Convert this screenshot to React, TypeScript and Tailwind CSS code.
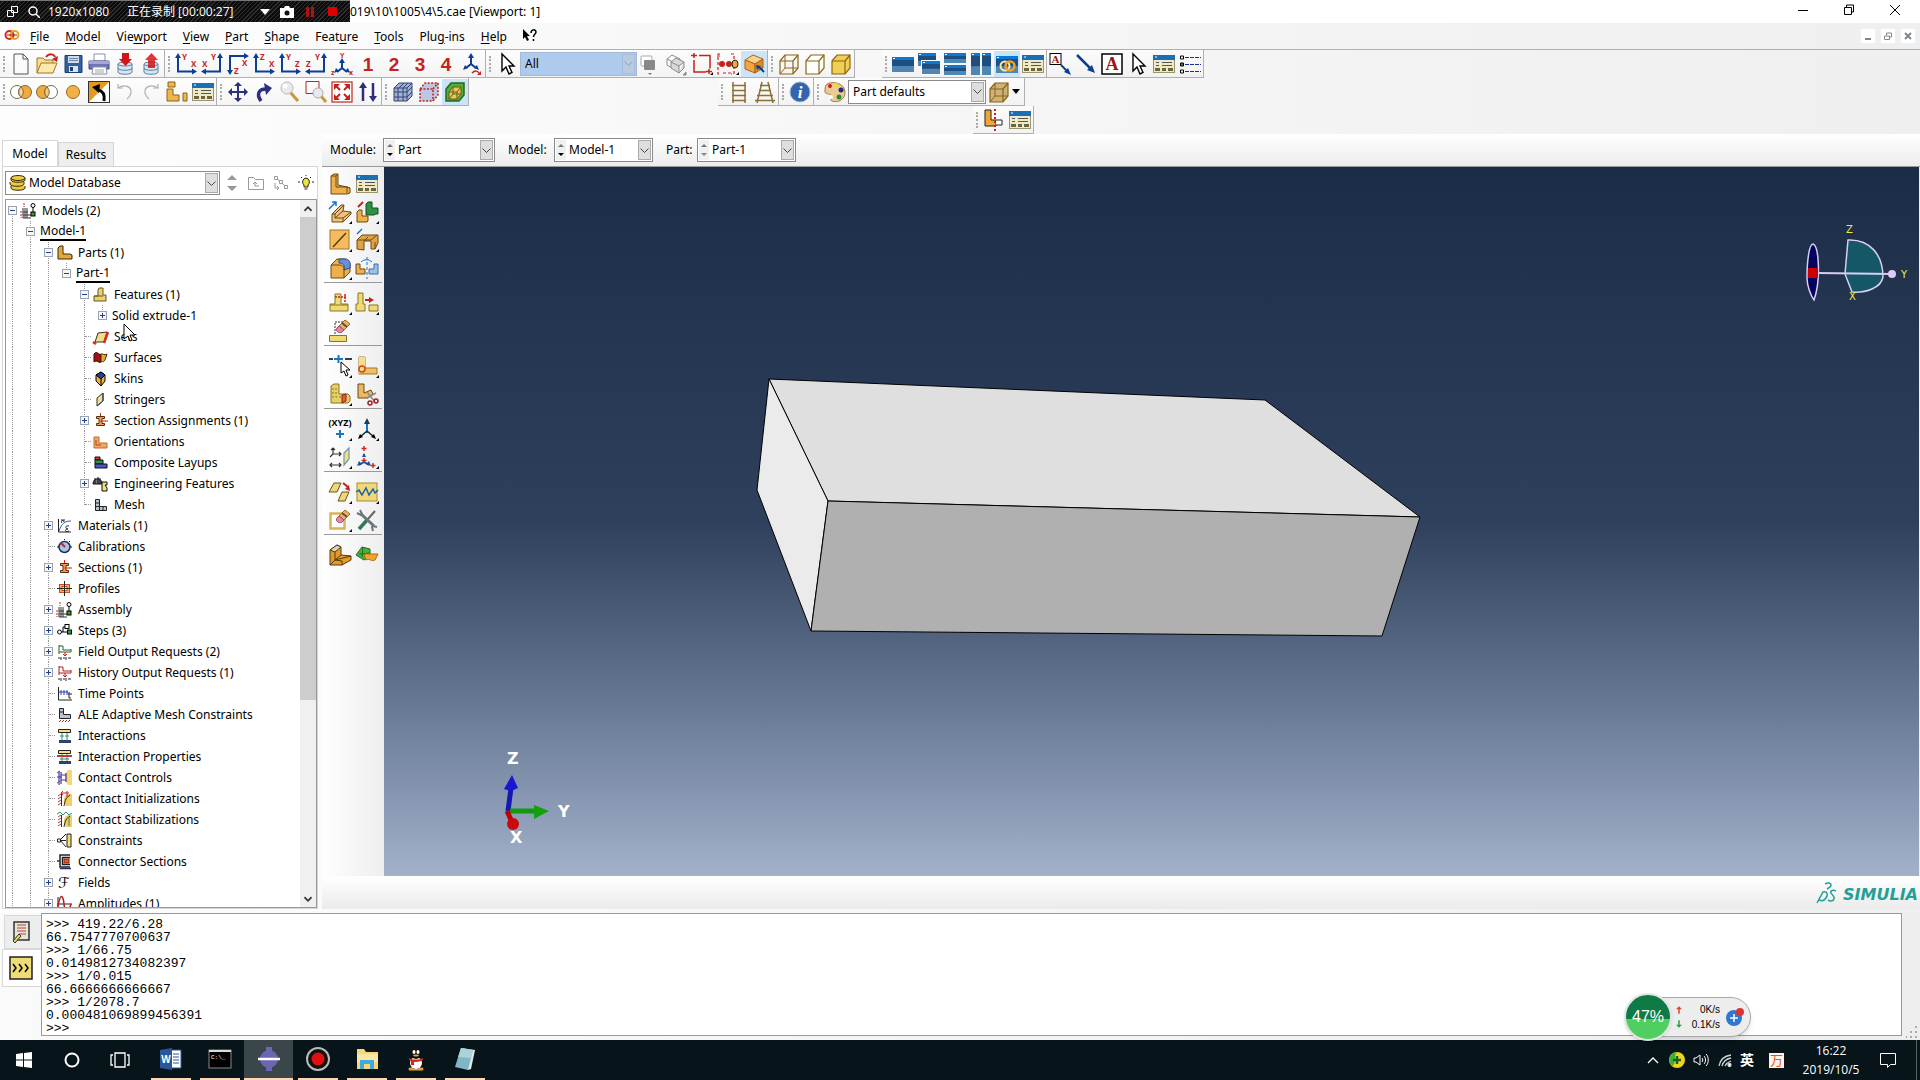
import { useState } from "react";
import type { ReactNode } from "react";

const RED = "#c5221a";
const NAVY = "#0a3f95";
const EDGE = "#6b4a12";

/* ---------- toolbar drawings, 22 x 22 ---------- */

function Axes({ kind, a, b }: { kind: "left" | "right" | "down"; a: string; b: string }) {
    const font = { fontFamily: '"Open Sans", sans-serif', fontSize: 8, fontWeight: 700, fill: RED };
    if (kind === "left") {
        return (
            <g>
                <path d="M3 4V18.500H18" fill="none" stroke={NAVY} strokeWidth="2" />
                <path d="M3 0l3 5H0zM22 18.500l-5 3v-6z" fill={NAVY} />
                <text x="7" y="7" {...font}>{a}</text>
                <text x="16" y="14" {...font}>{b}</text>
            </g>
        );
    }
    if (kind === "right") {
        return (
            <g>
                <path d="M19 4V18.500H4" fill="none" stroke={NAVY} strokeWidth="2" />
                <path d="M19 0l3 5h-6zM0 18.500l5 3v-6z" fill={NAVY} />
                <text x="10" y="7" {...font}>{a}</text>
                <text x="1" y="14" {...font}>{b}</text>
            </g>
        );
    }
    return (
        <g>
            <path d="M18 3H3V18" fill="none" stroke={NAVY} strokeWidth="2" />
            <path d="M22 3l-5 3V0zM3 22l3-5H0z" fill={NAVY} />
            <text x="15" y="13" {...font}>{a}</text>
            <text x="7" y="21" {...font}>{b}</text>
        </g>
    );
}

function Digit({ n }: { n: string }) {
    return (
        <text x="11" y="18" textAnchor="middle" fontFamily='"Liberation Sans", Arial, sans-serif' fontSize="19" fontWeight="700" fill={RED}>
            {n}
        </text>
    );
}

const manager = (
    <g>
        <rect x="0.500" y="2.500" width="21" height="17" fill="#efe9c8" stroke="#9a9470" />
        <rect x="0" y="2" width="22" height="5" fill="#1b6fb5" />
        <path d="M2 4h2" stroke="#fff" />
        <path d="M3 9.500h3M3 12.500h3M9 9.500h10M9 12.500h10" stroke="#555" />
        <path d="M2 16.500h5M9 16.500h4M15 16.500h5" stroke="#6d6740" strokeWidth="3" />
    </g>
);

const cube = (front: string, fill: string) => (
    <g stroke={front} strokeWidth="1.200" fill={fill}>
        <path d="M2 8l5-6h13v13l-5 6H2z" />
        <path d="M2 8h13v13M15 8l5-6" fill="none" />
    </g>
);

const pointer = <path d="M6 1v17l4-4 3 7 3-1.500-3-6.500h5z" fill="#fff" stroke="#000" strokeWidth="1.400" />;

const win = (x: number, y: number, w: number, h: number) => (
    <g>
        <rect x={x} y={y} width={w} height={h} fill="#1e4f80" />
        <rect x={x} y={y + h * 0.6} width={w} height={h * 0.4} fill="#4f86b4" />
        <rect x={x} y={y} width={w} height="3" fill="#0a78d6" />
        <rect x={x + 1} y={y + 1} width="2" height="1" fill="#fff" />
    </g>
);

const barrel = (
    <g stroke="#5d7f9e" fill="#d6e6f3">
        <path d="M4 11v8c0 3 14 3 14 0v-8" />
        <path d="M4 15c0 3 14 3 14 0" fill="none" />
        <ellipse cx="11" cy="11" rx="7" ry="2" />
    </g>
);

const tools: Record<string, ReactNode> = {
    new: <path d="M5 1h8l5 5v15H4V1zM13 1v5h5" fill="#fafafa" stroke="#555" />,
    open: (
        <g>
            <path d="M1 20V5h6l2 2h8v4" fill="#f6dd95" stroke="#a07722" />
            <path d="M1 20l4-10h16l-4 10z" fill="#fbe9b0" stroke="#a07722" />
            <path d="M10 4c3-4 8-3 9 0" fill="none" stroke={RED} strokeWidth="2" />
            <path d="M22 3l-1 6-5-3z" fill={RED} />
        </g>
    ),
    save: (
        <g>
            <path d="M3 2.500h17v17H3z" fill="#33609e" stroke="#1d3e70" />
            <path d="M6 3h11v7H6z" fill="#cfdcec" />
            <path d="M7 5.500h9M7 7.500h9" stroke="#6b86ac" />
            <path d="M7 13h9v6H7z" fill="#dfe5ec" />
            <path d="M8 14h3v4H8z" fill="#1d3e70" />
        </g>
    ),
    print: (
        <g>
            <path d="M6 1h11v7H6z" fill="#fff" stroke="#8a8fa8" />
            <path d="M1 8h20v8H1z" fill="#6e74b4" stroke="#474c86" />
            <path d="M1 8h20v3H1z" fill="#a3a8d6" />
            <path d="M5 14h13l1 7H4z" fill="#fff" stroke="#8a8fa8" />
            <path d="M7 17h9M7 19h9" stroke="#9aa" />
        </g>
    ),
    dbDown: <g>{barrel}<path d="M8 0h7v6h3l-6.500 7L5 6h3z" fill="#d3151a" /></g>,
    dbUp: <g>{barrel}<path d="M8 15h7V7h3l-6.500-7L5 7h3z" fill="#d3151a" opacity="0.850" /></g>,
    v1: <Axes kind="left" a="Y" b="X" />,
    v2: <Axes kind="right" a="Y" b="X" />,
    v3: <Axes kind="down" a="X" b="Z" />,
    v4: <Axes kind="left" a="Z" b="X" />,
    v5: <Axes kind="left" a="Y" b="Z" />,
    v6: <Axes kind="right" a="Y" b="Z" />,
    iso: (
        <g>
            <path d="M11 9v6l-5 4M11 15l5 4" fill="none" stroke={NAVY} strokeWidth="2" />
            <path d="M11 5l3 5H8zM3 20l2-5 3 3zM19 20l-2-5-3 3z" fill={NAVY} />
            <g fontFamily='"Open Sans", sans-serif' fontSize="7" fontWeight="700" fill={RED}>
                <text x="9" y="5">Y</text>
                <text x="0" y="22">z</text>
                <text x="18" y="22">x</text>
            </g>
        </g>
    ),
    n1: <Digit n="1" />,
    n2: <Digit n="2" />,
    n3: <Digit n="3" />,
    n4: <Digit n="4" />,
    isoRotate: (
        <g>
            <path d="M10 4v7l-5 4M10 11l5 4" fill="none" stroke={NAVY} strokeWidth="2" />
            <path d="M10 0l3 5H7zM2 17l2-5 3 3zM18 17l-2-5-3 3z" fill={NAVY} />
            <path d="M11 20c3-3 6-2 7 0" fill="none" stroke={RED} strokeWidth="1.500" />
            <path d="M20 18v4h-4z" fill={RED} />
        </g>
    ),
    pointer,
    pick: (
        <g>
            <rect x="2" y="3" width="11" height="10" rx="1" fill="#fff" stroke="#aaa" />
            <rect x="5" y="7" width="11" height="10" rx="1" fill="#888" />
            <path d="M9 20h4l-2 2z" fill="#777" />
        </g>
    ),
    ghostCube: (
        <g fill="none" stroke="#8b8b8b">
            <path d="M2 6l5-4 8 4-5 4zM2 6v6l8 5v-7M15 6v6l-5 5" />
            <path d="M6 9l5-4 8 4-5 4zM6 9v6l8 5v-7M19 9v6l-5 5" fill="#d8d8d8" />
            <path d="M21 22v-3l-3 3z" fill="#999" />
        </g>
    ),
    dragRect: (
        <g stroke={RED} strokeWidth="1.500" fill="none">
            <path d="M3 0v5M0 2.500h6M18 16v5M15 18.500h6" />
            <path d="M8 2.500h11v13M3 7v12h12" />
            <path d="M22 22v-3l-3 3z" fill="#000" stroke="none" />
        </g>
    ),
    dots: (
        <g>
            <path d="M3 1H1v20h2M14 1h3v20h-3M0 3h5M6 20h8" fill="none" stroke={RED} strokeDasharray="3 2" strokeWidth="1.200" />
            <circle cx="5" cy="11" r="3" fill={RED} />
            <circle cx="12" cy="11" r="3" fill={RED} />
            <ellipse cx="18" cy="11" rx="3" ry="4" fill="#eda83a" stroke="#222" />
            <path d="M22 22v-3l-3 3z" />
        </g>
    ),
    solidPick: (
        <g>
            <path d="M2 7l8-5 10 4-8 5z" fill="#fbd08a" stroke="#a4661a" />
            <path d="M2 7l10 4v9L2 16z" fill="#f3a545" stroke="#a4661a" />
            <path d="M20 6v9l-8 5v-9z" fill="#e08a2c" stroke="#a4661a" />
            <path d="M21 19l-5-5" stroke={NAVY} strokeWidth="2" />
            <path d="M13 12l5 1-4 4z" fill={NAVY} />
        </g>
    ),
    cubeWire: <g>{cube("#8a6414", "none")}<path d="M7 2v13H20M7 15l-5 6" fill="none" stroke="#8a6414" /></g>,
    cubeHidden: cube("#8a6414", "#fff"),
    cubeShade: cube("#8a6414", "#f1cf55"),
    w1: win(0, 4, 22, 15),
    w2: <g>{win(0, 0, 18, 13)}<rect x="3" y="7" width="19" height="15" fill="#fff" />{win(4, 8, 18, 13)}</g>,
    w3: <g>{win(0, 0, 22, 10)}{win(0, 12, 22, 10)}</g>,
    w4: <g>{win(1, 0, 9, 22)}{win(12, 0, 9, 22)}</g>,
    w5: (
        <g>
            {win(0, 3, 22, 17)}
            <circle cx="9" cy="13" r="4.500" fill="none" stroke="#ffe9a0" strokeWidth="2" />
            <circle cx="14" cy="13" r="4.500" fill="none" stroke="#f6a21b" strokeWidth="2.500" />
        </g>
    ),
    manager,
    textArrow: (
        <g>
            <rect x="1" y="0.500" width="11" height="11" fill="#fff" stroke="#000" />
            <text x="6.500" y="10" textAnchor="middle" fontFamily='"Liberation Serif", serif' fontSize="11" fontWeight="700" fill="#a31010">A</text>
            <path d="M12 12l7 7" stroke={NAVY} strokeWidth="2" />
            <path d="M22 22l-7-3 4-4z" fill={NAVY} />
        </g>
    ),
    arrow: <g><path d="M2 2l14 14" stroke={NAVY} strokeWidth="2.500" /><path d="M20 20l-8-3 5-5z" fill={NAVY} /></g>,
    textA: (
        <g>
            <rect x="1" y="1" width="20" height="20" fill="#fff" stroke="#000" strokeWidth="1.500" />
            <text x="11" y="17" textAnchor="middle" fontFamily='"Liberation Serif", serif' fontSize="18" fontWeight="700" fill="#a31010">A</text>
        </g>
    ),
    legend: (
        <g>
            <path d="M6 4.500h16M6 11.500h16M6 18.500h16" stroke="#1b2f9a" strokeDasharray="4 1" />
            <path d="M1.500 3h3v3h-3zM1.500 17h3v3h-3z" fill="#fffbd0" stroke="#000" />
            <path d="M1.500 10h3v3h-3z" fill="#666" stroke="#000" />
        </g>
    ),
    setUnion: (
        <g stroke="#7b6a4c">
            <circle cx="7" cy="11" r="6.500" fill="#fff" />
            <circle cx="15" cy="11" r="6.500" fill="#f0aa38" />
            <path d="M11 6a6.500 6.500 0 0 1 0 10a6.500 6.500 0 0 1 0-10" fill="#fbd491" />
        </g>
    ),
    setDiff: (
        <g stroke="#7b6a4c">
            <circle cx="7" cy="11" r="6.500" fill="#f0aa38" />
            <circle cx="15" cy="11" r="6.500" fill="#fff" />
            <path d="M11 6a6.500 6.500 0 0 1 0 10a6.500 6.500 0 0 1 0-10" fill="#f7c578" />
        </g>
    ),
    setOne: <circle cx="11" cy="11" r="6.500" fill="#f3b048" stroke="#9a6c1a" />,
    swap: (
        <g>
            <rect x="0.500" y="0.500" width="21" height="21" fill="#fff" stroke="#333" />
            <path d="M1 1h20L1 21z" fill="#e39a22" />
            <path d="M16 20c1-7-1-10-6-11" fill="none" stroke="#000" strokeWidth="3" />
            <path d="M4 6l8-3-1 9z" />
        </g>
    ),
    undo: <g fill="none" stroke="#b0b0b0" strokeWidth="1.200"><path d="M4 7c6-4 14-2 13 5-1 4-3 5-4 6" /><path d="M4 3v4h5" /></g>,
    redo: <g fill="none" stroke="#b0b0b0" strokeWidth="1.200"><path d="M18 7c-6-4-14-2-13 5 1 4 3 5 4 6" /><path d="M18 3v4h-5" /></g>,
    blocks: (
        <g fill="#eeb652" stroke="#8a6414">
            <path d="M2 1h7v5H2zM1 8h6v6h6v6H1zM17 12h4v8h-4z" />
        </g>
    ),
    pan: (
        <g>
            <path d="M11 4v14M4 11h14" stroke="#2d2f7c" strokeWidth="2" />
            <path d="M11 1l4 4H7zM11 21l4-4H7zM1 11l4-4v8zM21 11l-4-4v8z" fill="#2d2f7c" />
        </g>
    ),
    rotate: <g><path d="M8 20C3 13 6 8 13 8" fill="none" stroke="#2d2f7c" strokeWidth="3.500" /><path d="M11 2l8 5-6 7z" fill="#2d2f7c" /></g>,
    zoom: (
        <g>
            <path d="M11 11l8 9" stroke="#c79a3a" strokeWidth="3" />
            <circle cx="8" cy="7" r="6" fill="#e9eaec" stroke="#b9bbc0" />
            <circle cx="6" cy="5" r="2.500" fill="#fff" />
        </g>
    ),
    zoomBox: (
        <g>
            <path d="M1 0.500h13v12H1z" fill="none" stroke={RED} />
            <path d="M16 15l5 6" stroke="#c79a3a" strokeWidth="3" />
            <circle cx="13" cy="12" r="5" fill="#e9eaec" stroke="#a9abb0" />
        </g>
    ),
    fit: (
        <g>
            <rect x="1" y="1" width="20" height="20" fill="#fff" stroke={RED} strokeWidth="1.200" />
            <path d="M4 4l5 5M18 4l-5 5M4 18l5-5M18 18l-5-5" stroke={RED} strokeWidth="2" />
            <path d="M3 3h6l-6 6zM19 3h-6l6 6zM3 19h6l-6-6zM19 19h-6l6-6z" fill={RED} />
        </g>
    ),
    updown: (
        <g>
            <path d="M6 5v15M16 2v15" stroke="#2d2f7c" strokeWidth="2.500" />
            <path d="M6 1l4 6H2zM16 21l4-6h-8z" fill="#2d2f7c" />
        </g>
    ),
    meshCube: (
        <g fill="#9fb0d6" stroke="#35456f">
            <path d="M2 7l5-5h13v13l-5 5H2z" />
            <path d="M2 7h13v13M15 7l5-5M6 7v13M11 7v13M2 11h13l5-5M2 16h13l5-5M7 7l5-5M11 7l5-5" fill="none" />
        </g>
    ),
    redCube: (
        <g fill="#bcc7e4" stroke={RED} strokeWidth="1.500" strokeDasharray="2 1.500">
            <path d="M2 8l5-6h13v12l-5 6H2z" />
            <path d="M2 8h13v12M15 8l5-6" fill="none" />
        </g>
    ),
    greenCube: (
        <g>
            <path d="M2 8l5-6h13v12l-5 6H2z" fill="#4fae3d" stroke="#256a1a" strokeWidth="1.500" />
            <path d="M5 11l4-5h8v7l-4 5H5z" fill="#e4c95b" stroke="#6a5a12" />
            <path d="M5 11h8v7M13 11l4-5M9 6v7h8M9 13l-4 5" fill="none" stroke="#6a5a12" />
        </g>
    ),
    ladder: <path d="M5 1v21M17 1v21M4 4.500h14M4 9.500h14M4 14.500h14M4 19.500h14" stroke="#8a7138" strokeWidth="1.500" />,
    ladderWide: <path d="M8 1L3 22M14 1l5 21M6 4.500h10M5 9.500h12M3 14.500h16M1 19.500h20" stroke="#8a7138" strokeWidth="1.500" />,
    info: (
        <g>
            <circle cx="11" cy="11" r="10" fill="#3564ad" stroke="#9db4da" />
            <text x="11" y="17" textAnchor="middle" fontFamily='"Liberation Serif", serif' fontSize="17" fontStyle="italic" fontWeight="700" fill="#fff">i</text>
        </g>
    ),
    palette: (
        <g>
            <path d="M2 4c5-5 19-2 19 7 0 8-7 11-13 9-3-1 1-4-1-6s-5 0-6-3c0-3 0-5 1-7z" fill="#eccb95" stroke="#a37a3c" />
            <circle cx="6" cy="5" r="2" fill="#c62020" />
            <circle cx="12" cy="4" r="2" fill="#e8dd3a" />
            <circle cx="17" cy="9" r="2.500" fill="#1d2c86" />
            <circle cx="15" cy="16" r="2.500" fill="#2b8b35" />
            <circle cx="7" cy="16" r="2" fill="#fff" />
        </g>
    ),
    cubeTan: <g>{cube("#8a6414", "#cfb27a")}<path d="M7 2v13H20M7 15l-5 6" fill="none" stroke="#8a6414" /></g>,
    axisPart: (
        <g>
            <path d="M2 1h6v10h5v6H2z" fill="#f0a636" stroke="#222" />
            <path d="M13 11h6v5h-6" fill="#fff" stroke="#222" />
            <path d="M12 0v22" stroke={RED} strokeWidth="2" strokeDasharray="2 2" />
        </g>
    ),

    /* part module toolbox */
    part: <g stroke={EDGE}><path d="M2 3l3-2h4v11l9 2 3 1v5l-3 1H2z" fill="#eeb04a" /><path d="M2 3h5v11h11v6M7 3l2-2M18 14l3 1" fill="none" /></g>,
    extrude: (
        <g stroke={EDGE}>
            <path d="M3 13l9-9h3l-1 6 8 1v2l-8 8H3z" fill="#f2c27c" />
            <path d="M3 13h3v4h8v4M6 13l9-9M6 17l8-7M14 17l8-6" fill="none" />
            <path d="M0 8l7-7M3 1h4v4" stroke="#1577c8" strokeWidth="1.500" fill="none" />
        </g>
    ),
    copyPart: (
        <g>
            <path d="M10 3l2-2h4v6h6v6h-2l-2 1h-8z" fill="#2f8f46" stroke="#174f25" />
            <path d="M1 11l2-2h3v6h6v5l-1 1H1z" fill="#eeb04a" stroke={EDGE} />
            <path d="M2 6l5-5" stroke={RED} strokeWidth="2" />
        </g>
    ),
    plane: <g><rect x="1" y="1" width="19" height="19" fill="#f4bb62" stroke="#a87420" /><path d="M4 18L17 4" stroke="#5b3b08" strokeWidth="1.500" /></g>,
    sweep: (
        <g stroke={EDGE}>
            <path d="M1 11l5-5h16v8l-3 6h-4v-8H8v9l-7-1z" fill="#e2a343" />
            <path d="M1 11h14l6-5M8 12l4-4M19 20v-7" fill="none" />
            <path d="M1 5l5-5" stroke="#1577c8" strokeWidth="1.500" />
        </g>
    ),
    round: (
        <g>
            <path d="M2 8l6-6h7c4 0 6 3 6 7v6l-6 6H2z" fill="#edb04d" stroke={EDGE} />
            <path d="M10 2h6c4 0 6 3 5 9l-6 2c1-5-1-7-5-7z" fill="#6a8fd4" stroke="#2c4d92" />
            <path d="M2 8h7c4 0 6 1 6 5v8" fill="none" stroke={EDGE} />
        </g>
    ),
    mirror: (
        <g>
            <path d="M0 7h4v5h5v5H0z" fill="#eeb04a" stroke={EDGE} />
            <path d="M22 7h-4v5h-5v5h9z" fill="#9cc1e8" stroke="#3a6fae" />
            <path d="M11 0v22" stroke="#1577c8" strokeDasharray="3 2" />
            <path d="M5 5c3-3 8-3 11 0" fill="none" stroke="#1577c8" />
        </g>
    ),
    stamp: (
        <g>
            <path d="M6 2h6v10h7v7H1v-7h5z" fill="#eedb78" stroke="#8a7420" />
            <path d="M1 13h18" stroke="#8a7420" />
            <path d="M6 5h11M16 2v9" stroke={RED} strokeWidth="1.500" strokeDasharray="2 1" />
        </g>
    ),
    moveRight: (
        <g>
            <path d="M2 1h5v11h2v7H0v-7h2zM13 13h9v6h-9z" fill="#eedb78" stroke="#8a7420" />
            <path d="M9 8h5" stroke={RED} strokeWidth="2" />
            <path d="M13 5l5 3-5 3z" fill={RED} />
        </g>
    ),
    eraseStamp: (
        <g>
            <path d="M0.500 15.500h17v6h-17z" fill="#eedb78" stroke="#8a7420" />
            <path d="M6 14V2h8" fill="none" stroke="#333" strokeDasharray="2 1" />
            <path d="M10 6l6-6 5 4-6 6z" fill="#f0b060" stroke="#9a6c1a" />
            <path d="M13 3l5 4" stroke="#555" strokeWidth="2" />
            <path d="M10 6l5 4-2 2c-3 2-7-1-5-4z" fill="#e58aa6" stroke="#a04a66" />
        </g>
    ),
    cutLine: (
        <g>
            <path d="M0 4h4M16 4h7" stroke="#000" strokeWidth="1.500" />
            <path d="M5 4h9M9.500 0v8" stroke="#1577c8" strokeWidth="2" />
            <path d="M12 7v11l3-2 2 5 2-1-2-5h4z" fill="#fff" stroke="#000" />
        </g>
    ),
    partEdge: (
        <g>
            <path d="M3 2h6v11h12v6H3z" fill="#f0c069" stroke="#a87420" />
            <path d="M3 2h6v11l-6 6z" fill="#f4e08a" />
            <circle cx="6" cy="14" r="3" fill="none" stroke="#d24a1a" strokeWidth="1.500" />
        </g>
    ),
    partFace: (
        <g>
            <path d="M2 3l3-2h5v10h9l2 2v5l-2 2H2z" fill="#e7d069" stroke="#8a7420" />
            <path d="M4 5v12M7 5v9h6" fill="none" stroke="#8a7420" strokeDasharray="2 2" />
            <path d="M13 12l4-1v7l-4 2z" fill="#e0603a" stroke="#8f2410" />
        </g>
    ),
    scissors: (
        <g>
            <path d="M2 1h6v9l7-3 2 4-5 4H2z" fill="#eeb763" stroke={EDGE} />
            <path d="M11 9l8 10M11 15l9-5" stroke="#888" strokeWidth="1.500" />
            <circle cx="14" cy="20" r="2" fill="none" stroke="#a02020" strokeWidth="1.500" />
            <circle cx="20" cy="18" r="2" fill="none" stroke="#a02020" strokeWidth="1.500" />
        </g>
    ),
    xyz: (
        <g>
            <text x="11" y="8" textAnchor="middle" fontFamily='"Open Sans", sans-serif' fontSize="9" fontWeight="700">(XYZ)</text>
            <path d="M11 12v8M7 16h8" stroke="#1577c8" strokeWidth="2" />
        </g>
    ),
    triad: (
        <g>
            <path d="M11 3v12" stroke="#1577c8" strokeWidth="2" />
            <path d="M11 13l-7 6M11 13l7 6" stroke="#222" strokeWidth="1.500" />
            <path d="M11 0l3 6H8z" fill="#1a3c5c" />
            <path d="M2 21l2-5 3 3zM20 21l-2-5-3 3z" />
        </g>
    ),
    datumPlane: (
        <g stroke="#333" strokeWidth="1.200">
            <path d="M4 2v6h8M4 8l-3 3M10 6l2 2-2 2M2 4l2-2 2 2" fill="none" />
            <path d="M1 19h11M3 17l-2 2 2 2M10 17l2 2-2 2" fill="none" />
            <path d="M15 7l5-5v11l-5 6z" fill="#f2e07a" stroke="#6a9ab0" />
        </g>
    ),
    datumPoints: (
        <g>
            <path d="M8 0v5M5.500 2.500h5M8 12v5M5.500 14.500h5M17 17v5M14.500 19.500h5" stroke="#d8281c" strokeWidth="1.500" />
            <path d="M8 8v3M8 16l-5 3M8 16l5 3" stroke="#1c4f9c" strokeWidth="2" />
            <path d="M8 7l2 4H6zM1 20l2-5 3 3zM15 20l-5-2 3-3z" fill="#1c4f9c" />
        </g>
    ),
    repair: (
        <g>
            <path d="M5 2h7l-4 9H0zM13 11h7l-4 9H9z" fill="#efd67a" stroke="#6a5414" />
            <path d="M14 2l5 4" stroke={RED} strokeWidth="2" />
            <path d="M21 10l-5-2 4-4z" fill={RED} />
        </g>
    ),
    wave: (
        <g>
            <rect x="1" y="2" width="20" height="18" fill="#f2d87a" stroke="#a88a2c" />
            <path d="M0 11l3-2 3 5 4-7 3 7 4-6 2 4 3-3" fill="none" stroke="#1767a8" strokeWidth="1.500" />
        </g>
    ),
    eraser: (
        <g>
            <rect x="1.500" y="4.500" width="14" height="15" fill="#fff" stroke="#d9b45a" strokeWidth="2.500" />
            <path d="M10 7l6-6 5 4-6 6z" fill="#f0b060" stroke="#9a6c1a" />
            <path d="M13 4l5 4" stroke="#555" strokeWidth="2" />
            <path d="M10 7l5 4-2 2c-3 2-7-1-5-4z" fill="#e58aa6" stroke="#a04a66" />
        </g>
    ),
    wrench: (
        <g>
            <path d="M3 20L12 10" stroke="#2c7a5a" strokeWidth="3.500" />
            <path d="M12 10l7-8" stroke="#666" strokeWidth="2" />
            <path d="M5 5l13 12" stroke="#6c757d" strokeWidth="3" />
            <path d="M1 4l4 2 1-1-2-4M21 18l-4-1-1 1 1 4" fill="none" stroke="#6c757d" strokeWidth="2" />
        </g>
    ),
    solidPart: (
        <g stroke="#5a3b08">
            <path d="M1 6l7-5 4 2v8l10 1v4l-9 5H1z" fill="#e19a2e" />
            <path d="M1 6l7-5 4 2-6 5z" fill="#d8d3c4" />
            <path d="M6 8v8l16-4M12 11l-6 5 7 1v4M6 16l-5 5" fill="none" />
        </g>
    ),
    greenPart: (
        <g>
            <path d="M0 11L6 3l8 2v8l-6 3z" fill="#49b23f" stroke="#1f6a1a" />
            <path d="M3 10l11-1M7 3l-1 10" stroke="#1f6a1a" fill="none" />
            <path d="M8 10h14l-3 6c-4 2-5-2-9 0z" fill="#f0a52e" stroke="#b06a12" />
        </g>
    ),
};

function ToolButton({ icon, label, on }: { icon: string; label: string; on?: boolean }) {
    return (
        <button
            aria-label={label}
            className={`flex h-[26px] w-[26px] shrink-0 items-center justify-center ${on ? "bg-[#cce4f7]" : ""}`}
        >
            <svg className="size-[22px] overflow-visible" viewBox="0 0 22 22">{tools[icon]}</svg>
        </button>
    );
}

function Group({ children, grip = true }: { children: ReactNode; grip?: boolean }) {
    return (
        <div className="flex h-7 shrink-0 items-center border-r border-b border-[#b0b0b0] bg-linear-to-b from-white/60 to-[#f0f0f0]/60">
            {grip && <span className="mx-[3px] h-4 border-l-2 border-dotted border-[#a9a9a9]" />}
            {children}
        </div>
    );
}

function Chevron({ faint }: { faint?: boolean }) {
    return (
        <svg className="size-[9px]" viewBox="0 0 9 9" fill="none" stroke={faint ? "#8fa3bd" : "#444"}>
            <path d="M0.500 2.500l4 4 4-4" />
        </svg>
    );
}

function Combo({ id, label, value, width, spinner, disabledUp, muted, icon }: {
    id: string;
    label: string;
    value: string;
    width: string;
    spinner?: boolean;
    disabledUp?: boolean;
    muted?: boolean;
    icon?: ReactNode;
}) {
    return (
        <div className={`flex h-6 shrink-0 items-center border p-px ${muted ? "border-[#a4b8d4] bg-[#aecbee]" : "border-[#8a8a8a] bg-white"} ${width}`}>
            {spinner && (
                <span className="flex h-full w-2.5 flex-col justify-between bg-[#f0f0f0] py-[3px]">
                    <svg viewBox="0 0 10 5" className="h-[5px]"><path d="M2 4h6L5 1z" fill="#777" /></svg>
                    <svg viewBox="0 0 10 5" className="h-[5px]"><path d="M2 1h6L5 4z" fill={disabledUp ? "#888" : "#000"} /></svg>
                </span>
            )}
            {icon}
            <select id={id} aria-label={label} className="min-w-0 flex-1 appearance-none bg-transparent px-[3px] outline-none">
                <option>{value}</option>
            </select>
            <span className={`flex h-full w-[13px] items-center justify-center border ${muted ? "border-[#a8bcd8] bg-[#b9cbe2]" : "border-[#aaa] bg-[#dedede]"}`}>
                <Chevron faint={muted} />
            </span>
        </div>
    );
}

/* ---------- model tree ---------- */

const ibeam = (
    <g stroke="#5c2b0a">
        <path d="M3.500 3.500h8v2h-2.500v5h2.500v2h-8v-2H6v-5H3.500z" fill="#f0a050" />
        <path d="M7.500 0v3M12 8h3M7.500 8h5" stroke={RED} />
    </g>
);
const assembly = (
    <g>
        <path d="M2 5v10M4 5v10M6 5v10M2 15h8M2 12h8M2 9h5" stroke="#333" />
        <path d="M3 0v4M0 8v7" stroke={RED} strokeDasharray="2 1" />
        <path d="M12 4v5" stroke="#000" />
        <circle cx="12" cy="2.500" r="2" fill="#fff" stroke="#000" />
        <rect x="10" y="9" width="4" height="4" fill="#3a9a3a" stroke="#000" />
    </g>
);
const output = (color: string) => (
    <g fill="none">
        <path d="M2 1v9M2 2h4v4h8M2 8h12V5" stroke={color} />
        <path d="M8 8v4M6 10l2 2 2-2" stroke={RED} />
        <path d="M1 14h2M4 13v3M6 14h2M9 13v3M11 14h3" stroke="#222" />
    </g>
);
const contact = (accent: ReactNode) => (
    <g>
        <path d="M9 4c-3 3-3 8 0 11h6V3h-3z" fill="#f0cf6a" />
        <path d="M4.500 3v12" stroke="#333" />
        <path d="M1 5l3-2M1 8l3-2M1 11l3-2M1 14l3-2" stroke="#b04040" />
        <path d="M13 4c-5 3-5 7-6 11" fill="none" stroke="#222" />
        {accent}
    </g>
);

const treeIcons: Record<string, ReactNode> = {
    assembly,
    part: <path d="M1 3l2-2h3v8h7l2 1v4H1z" fill="#e3a83a" stroke="#3b2a08" />,
    features: <path d="M5 3l1-2h4v7h3v6H1V9h4zM1 9h9" fill="#e6d277" stroke="#6a5414" />,
    sets: <g><path d="M2 13L5 4l9-1-3 10z" fill="#f1df85" stroke="#333" /><path d="M11 14l4-11M0 13l3 2" stroke="#d92a2a" strokeWidth="2.500" /></g>,
    surfaces: <g><path d="M1 4c3-4 5 2 7 0v8c-2 2-4-3-7 0z" fill="#a31212" stroke="#400" /><path d="M8 4c2-1 3 2 6 0l-2 6c-2 3-3 1-4 2z" fill="#e5a53a" stroke="#4a3208" /></g>,
    skins: <g stroke="#000"><path d="M3 4l5-3 4 3v6l-4 5-5-5z" fill="#e8b14a" /><path d="M3 4l5-3 4 3-4 4z" fill="#2b3f9a" /><path d="M8 8v7" /></g>,
    stringers: <g><path d="M4 6l6-5v8l-6 5z" fill="#f1e27c" stroke="#333" /><path d="M4 14l6-5V1" fill="none" stroke="#2030a0" /></g>,
    ibeam,
    orient: <g><path d="M1 3h5v6h8v5H1z" fill="#f0a860" stroke="#b5702a" /><path d="M3 6v5h5" fill="none" stroke="#c33" /></g>,
    composite: <g stroke="#111"><path d="M2 2h5v3H2z" fill="#d33" /><path d="M2 5h8v4H2z" fill="#2f8f46" /><path d="M2 9h12v4H2z" fill="#4856c8" /></g>,
    engineering: <g stroke="#111"><path d="M0 8c0-7 9-7 9 0z" fill="#777" /><path d="M2 2v6M5 1v7M7 2v6" /><path d="M9 6h5v3h-2l2 3v3H9z" fill="#f1e27c" /></g>,
    mesh: <path d="M2.500 2.500h4v7h7v4h-11zM2.500 6h4M6.500 9.500v4M2.500 9.500h4M10 9.500v4" fill="#b9c3d2" stroke="#222" />,
    materials: <g fill="none"><path d="M1.500 1v13H14" stroke="#222" /><path d="M2 13c3-8 6-10 12-10" stroke="#3a5aa8" /><path d="M4 2h4M5 5c-2-2 2-4 2-1M12 8c-4-1-4 3-1 3-4 0-3 4 1 2" stroke="#222" /></g>,
    calibrations: <g><circle cx="7.500" cy="8" r="5.500" fill="#a9c4e8" stroke="#1f2f55" strokeWidth="1.500" /><path d="M4 4l4 4" stroke="#c22" strokeWidth="2" /><path d="M0 8h2M13 8h2M7.500 1V0M12 3l1-1" stroke="#111" /></g>,
    profiles: <g><rect x="2.500" y="3.500" width="10" height="8" fill="#f6b06a" stroke="#c8501a" /><rect x="5" y="5.500" width="5" height="4" fill="#fff" stroke="#c8501a" /><path d="M7.500 0v15M0 7.500h15" stroke="#222" /></g>,
    steps: <g stroke="#000" fill="#fff"><path d="M5 9h6M6 9V4h2" fill="none" /><circle cx="2.500" cy="9" r="2" /><rect x="8" y="1.500" width="4" height="4" /><rect x="10.500" y="7" width="4" height="4" fill="#3a9a3a" /></g>,
    field: output("#2f5f2f"),
    history: output("#b02020"),
    time: <g fill="none"><path d="M1.500 1v13H15" stroke="#222" /><path d="M2 6h9M4 4v5M7 4v5M10 4v5" stroke="#2a3fb0" /><path d="M12 6v6h2M11 8h4" stroke="#222" /></g>,
    ale: <g><path d="M2.500 1.500h4v6h7v4h-11zM2.500 5h4" fill="#b9c3d2" stroke="#222" /><path d="M2 15l2-2M5 15l2-2M8 15l2-2M11 15l2-2" stroke="#b02020" /></g>,
    interaction: <g><path d="M1.500 1.500h12v3h-12z" fill="#f1e27c" stroke="#222" /><path d="M5 5v7M10 5v7M3 8h4M8 8h4" stroke="#2f8f6a" /><path d="M2 12h12v3H2z" fill="#30406a" /></g>,
    interactionProps: <g><path d="M1.500 1.500h12v3h-12z" fill="#f1e27c" stroke="#222" /><path d="M5 5v7M10 5v7M3 10h9" stroke="#2f8f6a" /><path d="M0 7h15" stroke="#c43a3a" strokeWidth="2" /><path d="M2 12h12v3H2z" fill="#30406a" /></g>,
    contactControls: <g><path d="M11 0h4v15h-4c-4-4-4-11 0-15z" fill="#f3d878" /><path d="M2 1v14M4 2v12M4 5h5v5H4M0 7h5M9 3v9" fill="none" stroke="#4038a8" strokeWidth="1.200" /><path d="M0 3l3-2M0 13l3-2" stroke="#b04040" /></g>,
    contactInit: contact(<path d="M4 2h8M6 0L4 2l2 2M10 0v6" fill="none" stroke="#c22" />),
    contactStab: contact(<path d="M0 2l3-2 3 3 3-3 3 3 3-2M12 5v9" fill="none" stroke="#2f8f6a" />),
    constraints: <g stroke="#222"><path d="M10 1h4v13h-4z" fill="#f1df75" /><path d="M9 1L3 7l6 7M4 7.500h5M0.500 6h3v3h-3z" fill="none" /></g>,
    connector: <g fill="none"><path d="M13 1H3v12h10M13 3.500H5.500v7H13" stroke="#222" strokeWidth="1.500" /><rect x="7" y="5" width="5" height="4" fill="#e05a2a" stroke="#8a2a10" /><path d="M0 7h3M3 14.500h11" stroke="#24346a" strokeWidth="1.500" /></g>,
    fields: <text x="1" y="13" fontFamily='"DejaVu Sans", sans-serif' fontSize="15">ℱ</text>,
    amplitudes: <g fill="none"><path d="M1 1v14M0 8h15" stroke="#222" /><path d="M1 11C3-3 6-2 7 8s5 8 7 0" stroke="#b02020" strokeWidth="1.500" /></g>,
};

type Row = { text: string; depth: number; icon?: string; box?: "+" | "-"; guides: number[]; end?: boolean; current?: boolean };

const top = [0, 1];
const inner = [0, 1, 2];

const rows: Row[] = [
    { text: "Models (2)", depth: 0, icon: "assembly", box: "-", guides: [] },
    { text: "Model-1", depth: 1, box: "-", guides: [0], current: true },
    { text: "Parts (1)", depth: 2, icon: "part", box: "-", guides: top },
    { text: "Part-1", depth: 3, box: "-", guides: inner, end: true, current: true },
    { text: "Features (1)", depth: 4, icon: "features", box: "-", guides: inner },
    { text: "Solid extrude-1", depth: 5, box: "+", guides: [0, 1, 2, 4], end: true },
    { text: "Sets", depth: 4, icon: "sets", guides: inner },
    { text: "Surfaces", depth: 4, icon: "surfaces", guides: inner },
    { text: "Skins", depth: 4, icon: "skins", guides: inner },
    { text: "Stringers", depth: 4, icon: "stringers", guides: inner },
    { text: "Section Assignments (1)", depth: 4, icon: "ibeam", box: "+", guides: inner },
    { text: "Orientations", depth: 4, icon: "orient", guides: inner },
    { text: "Composite Layups", depth: 4, icon: "composite", guides: inner },
    { text: "Engineering Features", depth: 4, icon: "engineering", box: "+", guides: inner },
    { text: "Mesh", depth: 4, icon: "mesh", guides: inner, end: true },
    { text: "Materials (1)", depth: 2, icon: "materials", box: "+", guides: top },
    { text: "Calibrations", depth: 2, icon: "calibrations", guides: top },
    { text: "Sections (1)", depth: 2, icon: "ibeam", box: "+", guides: top },
    { text: "Profiles", depth: 2, icon: "profiles", guides: top },
    { text: "Assembly", depth: 2, icon: "assembly", box: "+", guides: top },
    { text: "Steps (3)", depth: 2, icon: "steps", box: "+", guides: top },
    { text: "Field Output Requests (2)", depth: 2, icon: "field", box: "+", guides: top },
    { text: "History Output Requests (1)", depth: 2, icon: "history", box: "+", guides: top },
    { text: "Time Points", depth: 2, icon: "time", guides: top },
    { text: "ALE Adaptive Mesh Constraints", depth: 2, icon: "ale", guides: top },
    { text: "Interactions", depth: 2, icon: "interaction", guides: top },
    { text: "Interaction Properties", depth: 2, icon: "interactionProps", guides: top },
    { text: "Contact Controls", depth: 2, icon: "contactControls", guides: top },
    { text: "Contact Initializations", depth: 2, icon: "contactInit", guides: top },
    { text: "Contact Stabilizations", depth: 2, icon: "contactStab", guides: top },
    { text: "Constraints", depth: 2, icon: "constraints", guides: top },
    { text: "Connector Sections", depth: 2, icon: "connector", guides: top },
    { text: "Fields", depth: 2, icon: "fields", box: "+", guides: top },
    { text: "Amplitudes (1)", depth: 2, icon: "amplitudes", box: "+", guides: top },
];

function TreeRow({ row }: { row: Row }) {
    const columns = Array.from({ length: row.depth }, (_, i) => i);
    return (
        <li className="flex h-[21px] items-center" role="treeitem">
            {columns.map((c) => (
                <span key={c} className="h-full w-[18px] shrink-0 pl-1.5">
                    {row.guides.includes(c) && <span className="block h-full border-l border-dotted border-[#999]" />}
                </span>
            ))}
            <span className="relative flex h-full w-[15px] shrink-0 items-center pl-0.5">
                <span className={`absolute left-1.5 border-l border-dotted border-[#999] ${row.depth === 0 ? "top-1/2 bottom-0" : row.end ? "top-0 bottom-1/2" : "top-0 bottom-0"}`} />
                {row.box ? (
                    <button aria-label={`Toggle ${row.text}`} className="relative flex size-[9px] items-center justify-center border border-[#98a4b0] bg-[#f7f7f7]">
                        <svg className="size-[7px]" viewBox="0 0 7 7" stroke="#24408c">
                            <path d={row.box === "+" ? "M1 3.500h5M3.500 1v5" : "M1 3.500h5"} />
                        </svg>
                    </button>
                ) : (
                    <span className="ml-[5px] w-1.5 border-t border-dotted border-[#999]" />
                )}
            </span>
            {row.icon && <svg className="mr-1.5 size-[15px] shrink-0 overflow-visible" viewBox="0 0 15 15">{treeIcons[row.icon]}</svg>}
            <span className={`whitespace-nowrap leading-4 ${row.icon ? "" : "ml-px"} ${row.current ? "border-b-2 border-black" : ""}`}>{row.text}</span>
        </li>
    );
}

function ModelPanel() {
    const [tab, setTab] = useState("Model");
    return (
        <aside className="flex w-[322px] shrink-0 flex-col pt-1.5 pl-0.5">
            <div className="flex h-[26px] items-end" role="tablist">
                {["Model", "Results"].map((t) => (
                    <button
                        key={t}
                        role="tab"
                        aria-selected={tab === t}
                        onClick={() => setTab(t)}
                        className={`w-14 border border-b-0 border-[#d5d5d5] ${tab === t ? "h-[26px] bg-white" : "h-6 bg-[#eee]"}`}
                    >
                        {t}
                    </button>
                ))}
            </div>
            <div className="mr-1 flex min-h-0 flex-1 flex-col border border-[#d5d5d5] bg-white pl-0.5 pt-1">
                <div className="flex shrink-0 items-center pb-1">
                    <Combo
                        id="tree-source"
                        label="Model source"
                        value="Model Database"
                        width="w-[215px]"
                        icon={
                            <svg className="ml-0.5 h-4 w-[17px]" viewBox="0 0 17 16" fill="#edc84a" stroke="#3b2a08">
                                <path d="M2 11v2c0 3 14 3 14 0v-2" />
                                <path d="M1 7v2c0 3 14 3 14 0V7" />
                                <path d="M2 3v2c0 3 14 3 14 0V3" />
                                <ellipse cx="9" cy="3" rx="7" ry="2.500" />
                            </svg>
                        }
                    />
                    <span className="flex flex-1 items-center justify-between pl-1.5 pr-[3px]">
                        <button aria-label="Step"><svg className="h-[18px] w-3" viewBox="0 0 12 18" fill="#999"><path d="M1 6h10L6 1zM1 12h10l-5 5z" /></svg></button>
                        <button aria-label="Up one level"><svg className="h-4 w-[18px]" viewBox="0 0 18 16" fill="none" stroke="#999"><path d="M1.500 14.500v-12h5l2 2h8v10zM12 11H8V7M6 9l2-2 2 2" /></svg></button>
                        <button aria-label="Collapse"><svg className="size-4" viewBox="0 0 16 16" fill="none" stroke="#999"><path d="M1.500 1.500h3v3h-3zM6.500 5.500h3v3h-3zM11.500 10.500h3v3h-3zM4 4l3 2M9 8l3 3M2 8v5h4M4 11l2 2-2 2" /></svg></button>
                        <button aria-label="Tips">
                            <svg className="size-4" viewBox="0 0 16 16" stroke="#222">
                                <path d="M8 3a4 4 0 0 1 2 7v2H6v-2a4 4 0 0 1 2-7z" fill="#f0e63a" />
                                <path d="M6.500 14h3M0 7h2M14 7h2M3 2l1 1M13 2l-1 1M8 0v1" />
                            </svg>
                        </button>
                    </span>
                </div>
                <div className="flex min-h-0 flex-1 border border-[#999]">
                    <ul role="tree" className="min-w-0 flex-1 overflow-hidden">
                        {rows.map((r) => <TreeRow key={r.text} row={r} />)}
                    </ul>
                    <div className="flex w-4 flex-col bg-[#f0f0f0]">
                        <button aria-label="Scroll up" className="flex h-[17px] items-center justify-center"><svg className="size-2 rotate-180" viewBox="0 0 9 9" fill="none" stroke="#333" strokeWidth="2"><path d="M0.500 2.500l4 4 4-4" /></svg></button>
                        <div className="grow-[482] bg-[#cdcdcd]" />
                        <div className="grow-[190]" />
                        <button aria-label="Scroll down" className="flex h-[17px] items-center justify-center"><svg className="size-2" viewBox="0 0 9 9" fill="none" stroke="#333" strokeWidth="2"><path d="M0.500 2.500l4 4 4-4" /></svg></button>
                    </div>
                </div>
            </div>
        </aside>
    );
}

/* ---------- part module ---------- */

const toolbox: [string, string, boolean?][][] = [
    [["part", "Create part"], ["manager", "Part manager"], ["extrude", "Create solid", true], ["copyPart", "Copy part", true], ["plane", "Create shell", true], ["sweep", "Create cut", true], ["round", "Round", true], ["mirror", "Mirror"]],
    [["stamp", "Edit feature", true], ["moveRight", "Suppress", true], ["eraseStamp", "Delete feature"]],
    [["cutLine", "Partition edge", true], ["partEdge", "Partition face", true], ["partFace", "Partition cell", true], ["scissors", "Remove faces"]],
    [["xyz", "Datum point", true], ["triad", "Datum axis", true], ["datumPlane", "Datum plane", true], ["datumPoints", "Datum system", true]],
    [["repair", "Repair", true], ["wave", "Replace", true], ["eraser", "Erase", true], ["wrench", "Geometry tools"]],
    [["solidPart", "Midsurface"], ["greenPart", "Assign"]],
];

function Toolbox() {
    return (
        <div className="flex w-[62px] shrink-0 flex-col bg-linear-to-r from-white to-[#eee] px-0.5">
            {toolbox.map((group, i) => (
                <div key={i} className={`grid grid-cols-[27px_27px] px-0.5 ${i === 0 ? "pt-[3px]" : "pt-1.5"} ${i < toolbox.length - 1 ? "border-b border-[#999]" : ""}`}>
                    {group.map(([icon, label, more]) => (
                        <button key={icon} aria-label={label} className="flex h-7 items-center justify-center">
                            <svg className="size-6 overflow-visible" viewBox="-1 -1 24 24">
                                {tools[icon]}
                                {more && <path d="M23 20v3h-3z" fill="#000" />}
                            </svg>
                        </button>
                    ))}
                </div>
            ))}
        </div>
    );
}

function Viewport() {
    return (
        <div className="mr-px min-h-0 min-w-0 flex-1 bg-linear-to-b from-[#1b2d46] via-[#2e405c] via-50% to-[#a3b2cb]">
            <svg className="h-full w-full" viewBox="384 167 1535 709" role="img" aria-label="Part-1">
                <g stroke="#000" strokeLinejoin="round">
                    <path d="M769 379L1265 400L1420 517L828 501z" fill="#dfdfdf" />
                    <path d="M769 379L828 501L811 631L757 490z" fill="#ebebeb" />
                    <path d="M828 501L1420 517L1382 636L811 631z" fill="#b0b0b0" />
                </g>

                {/* view compass */}
                <g stroke="#d9ccf7" strokeWidth="1.500">
                    <path d="M1813 244C1819 246 1821 280 1814 300C1811 296 1807 286 1807 278C1807 262 1809 244 1813 244z" fill="#03035e" />
                    <path d="M1848 240C1870 239 1883 255 1883 277C1881 288 1866 293 1852 292L1845 274z" fill="#145867" />
                    <path d="M1818 273L1892 274" strokeWidth="2" />
                </g>
                <rect x="1808" y="268" width="10" height="10" fill="#cc0000" />
                <circle cx="1892" cy="274" r="4" fill="#d9ccf7" />
                <g fontFamily='"DejaVu Sans", sans-serif' fontSize="10" fill="#f0ee3c">
                    <text x="1846" y="233">Z</text>
                    <text x="1901" y="278">Y</text>
                    <text x="1849" y="300">X</text>
                </g>

                {/* triad */}
                <path d="M508 811L511 788" stroke="#1616b4" strokeWidth="5" />
                <path d="M512 775L518 788Q511 792 504 789z" fill="#1818d0" />
                <path d="M510 811H535" stroke="#0f9a0f" strokeWidth="5" />
                <path d="M549 811L534 805V819z" fill="#10a010" />
                <path d="M507 811L512 822" stroke="#c00000" strokeWidth="5" />
                <circle cx="513" cy="824" r="6" fill="#cc0a0a" />
                <g fontFamily='"DejaVu Sans", sans-serif' fontSize="16" fontWeight="700" fill="#fff">
                    <text x="507" y="764">Z</text>
                    <text x="558" y="817">Y</text>
                    <text x="510" y="843">X</text>
                </g>
            </svg>
        </div>
    );
}

/* ---------- console ---------- */

const consoleText = `>>> 419.22/6.28
66.7547770700637
>>> 1/66.75
0.0149812734082397
>>> 1/0.015
66.6666666666667
>>> 1/2078.7
0.000481069899456391
>>>`;

function Console() {
    return (
        <section className="relative flex h-[127px] shrink-0 bg-linear-to-r from-[#fafafa] to-[#eee]">
            <div className="flex w-[41px] flex-col pt-0.5 pl-0.5">
                <button aria-label="Message area" className="ml-0.5 flex h-[34px] items-center justify-center border border-r-0 border-[#d8d8d8] bg-[#ededed] pr-1">
                    <svg className="h-[22px] w-5" viewBox="0 0 20 22">
                        <path d="M3 1h15v18H3z" fill="#e6e6d8" stroke="#333" strokeWidth="1.500" />
                        <path d="M6 4h9M6 7h9M6 10h9M8 13h7" stroke="#c23a3a" />
                        <path d="M2 20l6-7 2 2-6 7z" fill="#e8d44a" stroke="#333" />
                    </svg>
                </button>
                <button aria-label="Kernel command line" className="flex h-[38px] items-center justify-center border border-r-0 border-[#d8d8d8] bg-white pr-0.5">
                    <svg className="size-6" viewBox="0 0 24 24">
                        <rect x="1" y="1" width="22" height="22" fill="#eedd74" stroke="#222" strokeWidth="1.500" />
                        <path d="M4 8l3 4-3 4M10 8l3 4-3 4M16 8l3 4-3 4" fill="none" stroke="#000" strokeWidth="1.500" />
                    </svg>
                </button>
            </div>
            <textarea
                aria-label="Command line"
                readOnly
                value={consoleText}
                className="mb-1 flex-1 resize-none overflow-hidden border border-[#999] bg-white pt-1 pl-1 font-['Liberation_Mono',monospace] text-[13px] leading-[13px] outline-none"
            />
            <div className="flex w-[18px] items-end justify-end p-0.5">
                <svg className="size-3" viewBox="0 0 12 12" fill="#aaa">
                    <path d="M9 0h2v2H9zM9 5h2v2H9zM9 10h2v2H9zM4 5h2v2H4zM4 10h2v2H4zM0 10h1v2H0z" />
                </svg>
            </div>

            {/* floating network meter */}
            <div className="absolute right-[169px] bottom-[3px] flex h-10 w-[124px] items-center rounded-full border border-[#aaa] bg-[#ededed] font-['Liberation_Sans',Arial,sans-serif] text-[10px] shadow-md">
                <span className="-ml-1 flex size-12 shrink-0 items-center justify-center rounded-full border-2 border-[#e4e4e4] bg-linear-to-b from-[#0e7a45] from-55% to-[#4fcf5f] to-55% text-base text-white shadow">47%</span>
                <span className="ml-1 flex flex-col gap-1.5">
                    <svg className="h-2 w-1.5" viewBox="0 0 8 10"><path d="M4 0l4 4H5v6H3V4H0z" fill="#d9452c" /></svg>
                    <svg className="h-2 w-1.5" viewBox="0 0 8 10"><path d="M4 10l4-4H5V0H3v6H0z" fill="#2f9a4a" /></svg>
                </span>
                <span className="flex-1 text-right leading-[15px]">0K/s<br />0.1K/s</span>
                <svg className="mx-1.5 size-[18px]" viewBox="0 0 18 18">
                    <circle cx="8" cy="10" r="8" fill="#2f78d2" />
                    <path d="M8 6v8M4 10h8" stroke="#fff" strokeWidth="1.500" />
                    <circle cx="14" cy="4" r="4" fill="#dd3333" />
                </svg>
            </div>
        </section>
    );
}

/* ---------- taskbar ---------- */

const apps: { name: string; active?: boolean; art: ReactNode }[] = [
    {
        name: "Word",
        art: (
            <g>
                <path d="M12 3h10v18H12z" fill="#fff" stroke="#2b579a" />
                <path d="M14 7h6M14 10h6M14 13h6M14 16h6" stroke="#2b579a" />
                <path d="M1 3l12-2v22L1 21z" fill="#2b579a" />
                <text x="7" y="16" textAnchor="middle" fontFamily='"Liberation Sans", sans-serif' fontSize="10" fontWeight="700" fill="#fff">W</text>
            </g>
        ),
    },
    {
        name: "Command Prompt",
        art: (
            <g>
                <rect x="1" y="3" width="22" height="18" fill="#000" stroke="#888" />
                <path d="M1 4h22" stroke="#ddd" strokeWidth="2" />
                <text x="3" y="12" fontFamily='"Liberation Mono", monospace' fontSize="6" fill="#fff">C:\_</text>
            </g>
        ),
    },
    {
        name: "Abaqus/CAE",
        active: true,
        art: (
            <g>
                <path d="M9 0h6v24H9z" fill="#6b66b4" />
                <circle cx="12" cy="12" r="9" fill="#6b66b4" />
                <path d="M1 12h22" stroke="#fff" strokeWidth="2.500" />
            </g>
        ),
    },
    {
        name: "Recorder",
        art: (
            <g>
                <circle cx="12" cy="12" r="11" fill="#111" stroke="#bbb" strokeWidth="2" />
                <circle cx="12" cy="12" r="6.500" fill="#e01010" />
            </g>
        ),
    },
    {
        name: "File Explorer",
        art: (
            <g>
                <path d="M2 2h7l2 3h12v17H2z" fill="#f6d878" />
                <path d="M2 7h21v8H2z" fill="#fbe7a4" />
                <path d="M5 22v-9h14v9h-4v-5H9v5z" fill="#3fa9e0" />
            </g>
        ),
    },
    {
        name: "QQ",
        art: (
            <g>
                <path d="M6 22h5M13 22h5" stroke="#f0a020" strokeWidth="3" strokeLinecap="round" />
                <ellipse cx="12" cy="14" rx="7.500" ry="8" fill="#111" />
                <ellipse cx="12" cy="16" rx="6" ry="6" fill="#fff" />
                <ellipse cx="12" cy="6" rx="5.500" ry="6" fill="#111" />
                <ellipse cx="10" cy="5" rx="1.500" ry="2" fill="#fff" />
                <ellipse cx="14" cy="5" rx="1.500" ry="2" fill="#fff" />
                <ellipse cx="12" cy="8.500" rx="3" ry="1" fill="#f0a020" />
                <path d="M5 11c4 2 10 2 14 0v2c-3 2-7 2-9 2v3H7v-4l-2-1z" fill="#d9281c" />
            </g>
        ),
    },
    {
        name: "Notepad",
        art: (
            <g>
                <path d="M8 1l14 2-4 19-3 1z" fill="#dfe8ea" />
                <path d="M8 1l12 2-5 20-13-3z" fill="#7fb7c4" />
                <path d="M8 1l12 2-2 8-13-1z" fill="#aad3da" />
            </g>
        ),
    },
];

function Taskbar() {
    return (
        <footer className="flex h-10 shrink-0 bg-[#07141a] text-white">
            <button aria-label="Start" className="flex w-12 items-center justify-center">
                <svg className="size-4" viewBox="0 0 16 16" fill="#fff"><path d="M0 2l7-1v6.500H0zM8 1l8-1v7.500H8zM0 8.500h7V15l-7-1zM8 8.500h8V16l-8-1z" /></svg>
            </button>
            <button aria-label="Cortana" className="flex w-12 items-center justify-center">
                <svg className="size-4" viewBox="0 0 16 16" fill="none" stroke="#fff" strokeWidth="2"><circle cx="8" cy="8" r="6.500" /></svg>
            </button>
            <button aria-label="Task view" className="mr-0.5 flex w-12 items-center justify-center">
                <svg className="h-4 w-5" viewBox="0 0 20 16" fill="none" stroke="#fff" strokeWidth="1.300"><path d="M5 1h10v14H5zM3 3H1v10h2M17 3h2v10h-2" /></svg>
            </button>
            {apps.map((a) => (
                <button key={a.name} aria-label={a.name} className={`flex w-[49px] flex-col items-center ${a.active ? "bg-[#3b464b]" : ""}`}>
                    <span className="flex flex-1 items-center"><svg className="size-6" viewBox="0 0 24 24">{a.art}</svg></span>
                    <span className={`h-0.5 bg-[#fbd8b0] ${a.active ? "w-full" : "w-10"}`} />
                </button>
            ))}
            <div className="ml-auto flex items-center">
                <button aria-label="Show hidden icons" className="w-6"><svg className="mx-auto h-2 w-3" viewBox="0 0 12 8" fill="none" stroke="#fff" strokeWidth="1.300"><path d="M1 7l5-5 5 5" /></svg></button>
                <button aria-label="Security" className="w-6">
                    <svg className="mx-auto size-4" viewBox="0 0 16 16"><circle cx="8" cy="8" r="8" fill="#f2d21b" /><path d="M8 0a8 8 0 0 0-5 14C8 12 4 4 8 0z" fill="#3fae35" /><path d="M8 4v8M4 8h8" stroke="#14641c" strokeWidth="2.500" /></svg>
                </button>
                <button aria-label="Volume" className="w-6">
                    <svg className="mx-auto size-4" viewBox="0 0 16 16" fill="none" stroke="#fff"><path d="M1 6h2l4-3v10L3 10H1zM9 6c1 1 1 3 0 4M11 4c2 2 2 6 0 8M13 2c3 3 3 9 0 12" /></svg>
                </button>
                <button aria-label="Network" className="w-6">
                    <svg className="mx-auto size-4" viewBox="0 0 16 16" fill="none" stroke="#cfd6d8" strokeWidth="1.300"><path d="M2 14C3 8 7 4 14 3M5 14c1-4 4-7 9-8M8 14c1-2 3-4 6-5" /><circle cx="12.500" cy="13" r="1.500" fill="#fff" /></svg>
                </button>
                <button className="w-5 text-sm font-bold">英</button>
                <button className="ml-3 size-[15px] bg-[#fff4ec] text-[13px] leading-[15px] text-[#e8501c]">万</button>
                <button className="ml-3 w-[70px] text-center font-['Open_Sans',sans-serif] text-xs leading-[19px]">16:22<br />2019/10/5</button>
                <button aria-label="Notifications" className="ml-3.5 mr-5"><svg className="size-4" viewBox="0 0 16 16" fill="none" stroke="#fff"><path d="M0.500 1.500h15v11h-5l-3 3v-3h-7z" /></svg></button>
                <span className="mr-[3px] h-10 border-l border-[#5a6366]" />
            </div>
        </footer>
    );
}

/* ---------- window frame ---------- */

const menus: [string, string, string][] = [
    ["", "F", "ile"], ["", "M", "odel"], ["Vie", "w", "port"], ["", "V", "iew"], ["", "P", "art"],
    ["", "S", "hape"], ["Feat", "u", "re"], ["", "T", "ools"], ["Plu", "g", "-ins"], ["", "H", "elp"],
];

function TitleBar() {
    return (
        <header className="flex h-[23px] shrink-0 items-start bg-white">
            <div className="flex h-[22px] w-[350px] shrink-0 items-center border-t border-[#777] bg-[repeating-linear-gradient(135deg,#0c0c0c_0px,#0c0c0c_2px,#2e2e2e_2px,#2e2e2e_3px)] pl-[7px] font-['Open_Sans','Noto_Sans_CJK_SC',sans-serif] text-white">
                <svg className="size-[11px]" viewBox="0 0 11 11" fill="none" stroke="#fff"><path d="M4.500 0.500h6v6h-6zM0.500 4.500h6v6h-6z" /></svg>
                <svg className="ml-2.5 size-3" viewBox="0 0 12 12" fill="none" stroke="#fff" strokeWidth="1.500"><circle cx="5" cy="5" r="4" /><path d="M8 8l4 4" /></svg>
                <span className="ml-2 w-[79px]">1920x1080</span>
                <span className="w-[133px] whitespace-nowrap">正在录制 [00:00:27]</span>
                <svg className="h-1.5 w-2.5" viewBox="0 0 10 6" fill="#fff"><path d="M0 0h10L5 6z" /></svg>
                <svg className="ml-2.5 h-3 w-3.5" viewBox="0 0 14 12"><path d="M0 2h4l1-2h4l1 2h4v10H0z" fill="#fff" /><circle cx="7" cy="7" r="2.500" fill="#111" /></svg>
                <svg className="ml-3 h-2.5 w-2" viewBox="0 0 8 10" fill="#b01010"><path d="M0 0h3v10H0zM5 0h3v10H5z" /></svg>
                <svg className="ml-3.5 size-[9px]" viewBox="0 0 9 9" fill="#dd0000"><path d="M0 0h9v9H0z" /></svg>
            </div>
            <h1 className="leading-6">019\10\1005\4\5.cae [Viewport: 1]</h1>
            <div className="ml-auto flex gap-[34px] pr-[19px] pt-1">
                <button aria-label="Minimize"><svg className="size-3" viewBox="0 0 12 12" stroke="#000"><path d="M1 6.500h10" /></svg></button>
                <button aria-label="Restore"><svg className="size-3" viewBox="0 0 12 12" fill="none" stroke="#000"><path d="M1.500 3.500h7v7h-7zM3.500 3v-2h7v7h-2" /></svg></button>
                <button aria-label="Close"><svg className="size-3" viewBox="0 0 12 12" stroke="#000"><path d="M1 1l10 10M11 1L1 11" /></svg></button>
            </div>
        </header>
    );
}

function MenuBar() {
    return (
        <nav className="flex h-[27px] shrink-0 items-center border-b border-[#b0b0b0] pl-1">
            <svg className="mr-0.5 h-4 w-4" viewBox="0 0 16 16" fill="none">
                <circle cx="5.500" cy="7" r="4" stroke="#d8281c" strokeWidth="2" />
                <circle cx="10.500" cy="7" r="4" stroke="#e8a01c" strokeWidth="2" />
                <path d="M3 7h10" stroke="#a01010" />
            </svg>
            {menus.map(([before, key, after]) => (
                <button key={before + key + after} className="px-2 pt-0.5 leading-5">
                    {before}<span className="underline underline-offset-2">{key}</span>{after}
                </button>
            ))}
            <button aria-label="Context help" className="pl-2">
                <svg className="h-3.5 w-3.5" viewBox="0 0 14 14"><path d="M0 0v10l2-2 2 4 2-1-2-4h3z" /><path d="M8 4c0-4 5-4 5-1 0 2-2.500 2-2.500 5M10.500 10v2" fill="none" stroke="#000" strokeWidth="1.500" /></svg>
            </button>
            <div className="ml-auto flex gap-1.5 pr-[5px]">
                <button aria-label="Minimize viewport" className="flex size-3.5 items-center justify-center bg-white"><svg className="size-2" viewBox="0 0 8 8"><path d="M1 6h6v2H1z" fill="#7d8790" /></svg></button>
                <button aria-label="Restore viewport" className="flex size-3.5 items-center justify-center bg-white"><svg className="size-2" viewBox="0 0 8 8" fill="none" stroke="#7d8790"><path d="M0.500 4h5v3.500h-5zM2.500 3.500V1h5v4H6" /></svg></button>
                <button aria-label="Close viewport" className="flex size-3.5 items-center justify-center bg-white"><svg className="size-2" viewBox="0 0 8 8" stroke="#7d8790" strokeWidth="2"><path d="M1 1l6 6M7 1L1 7" /></svg></button>
            </div>
        </nav>
    );
}

function Toolbars() {
    return (
        <div className="shrink-0">
            <div className="flex">
                <Group>
                    <ToolButton icon="new" label="New" />
                    <ToolButton icon="open" label="Open" />
                    <ToolButton icon="save" label="Save" />
                    <ToolButton icon="print" label="Print" />
                    <ToolButton icon="dbDown" label="Load database" />
                    <ToolButton icon="dbUp" label="Store database" />
                </Group>
                <Group>
                    {["v1", "v2", "v3", "v4", "v5", "v6", "iso", "n1", "n2", "n3", "n4", "isoRotate"].map((v) => (
                        <ToolButton key={v} icon={v} label={`View ${v}`} />
                    ))}
                </Group>
                <Group>
                    <ToolButton icon="pointer" label="Select" />
                    <Combo id="selection" label="Selection filter" value="All" width="w-[117px]" muted />
                    <ToolButton icon="pick" label="Pick" />
                    <ToolButton icon="ghostCube" label="Inside" />
                    <ToolButton icon="dragRect" label="Drag shape" />
                    <ToolButton icon="dots" label="Selection options" />
                    <ToolButton icon="solidPick" label="Select from exterior" on />
                </Group>
                <Group>
                    <ToolButton icon="cubeWire" label="Wireframe" />
                    <ToolButton icon="cubeHidden" label="Hidden" />
                    <ToolButton icon="cubeShade" label="Shaded" />
                </Group>
                <div className="w-[27px]" />
                <Group>
                    <ToolButton icon="w1" label="New viewport" />
                    <ToolButton icon="w2" label="Cascade" />
                    <ToolButton icon="w3" label="Tile horizontally" />
                    <ToolButton icon="w4" label="Tile vertically" />
                    <ToolButton icon="w5" label="Link viewports" on />
                    <ToolButton icon="manager" label="Viewport manager" />
                </Group>
                <Group grip={false}>
                    <ToolButton icon="textArrow" label="Annotation" />
                    <ToolButton icon="arrow" label="Arrow" />
                    <ToolButton icon="textA" label="Text" />
                    <ToolButton icon="pointer" label="Edit annotation" />
                    <ToolButton icon="manager" label="Annotation manager" />
                    <ToolButton icon="legend" label="Legend" />
                </Group>
            </div>
            <div className="flex">
                <Group>
                    <ToolButton icon="setUnion" label="Union" />
                    <ToolButton icon="setDiff" label="Difference" />
                    <ToolButton icon="setOne" label="Intersection" />
                    <ToolButton icon="swap" label="Replace selected" />
                    <ToolButton icon="undo" label="Undo" />
                    <ToolButton icon="redo" label="Redo" />
                    <ToolButton icon="blocks" label="Display group" />
                    <ToolButton icon="manager" label="Display group manager" />
                </Group>
                <Group>
                    <ToolButton icon="pan" label="Pan" />
                    <ToolButton icon="rotate" label="Rotate" />
                    <ToolButton icon="zoom" label="Magnify" />
                    <ToolButton icon="zoomBox" label="Box zoom" />
                    <ToolButton icon="fit" label="Auto-fit" />
                    <ToolButton icon="updown" label="Cycle views" />
                </Group>
                <Group>
                    <ToolButton icon="meshCube" label="Show mesh" />
                    <ToolButton icon="redCube" label="Show edges" />
                    <ToolButton icon="greenCube" label="Show reference" on />
                </Group>
                <div className="w-[249px]" />
                <Group>
                    <ToolButton icon="ladder" label="Perspective off" />
                    <ToolButton icon="ladderWide" label="Perspective on" />
                </Group>
                <Group>
                    <ToolButton icon="info" label="Query" />
                </Group>
                <Group>
                    <ToolButton icon="palette" label="Color code" />
                    <Combo id="color-code" label="Color code by" value="Part defaults" width="w-[138px]" />
                    <ToolButton icon="cubeTan" label="Translucency" />
                    <button aria-label="More" className="w-3"><svg className="h-[5px] w-2" viewBox="0 0 8 5"><path d="M0 0h8L4 5z" /></svg></button>
                </Group>
            </div>
            <div className="flex">
                <div className="w-[973px]" />
                <Group>
                    <ToolButton icon="axisPart" label="Edit feature" />
                    <ToolButton icon="manager" label="Feature manager" />
                </Group>
            </div>
        </div>
    );
}

export default function App() {
    return (
        <div className="relative flex h-screen flex-col overflow-hidden bg-linear-to-r from-[#fdfdfd] to-[#efefef] font-['Noto_Sans','Noto_Sans_CJK_SC',sans-serif] text-xs text-black">
            <TitleBar />
            <MenuBar />
            <Toolbars />
            <main className="flex min-h-0 flex-1 pb-1">
                <ModelPanel />
                <div className="flex min-w-0 flex-1 flex-col">
                    <div className="flex h-[33px] shrink-0 items-center border-b border-[#999] bg-linear-to-b from-white to-[#ececec] pl-2">
                        <label htmlFor="module" className="w-[53px]">Module:</label>
                        <Combo id="module" label="Module" value="Part" width="w-28" spinner />
                        <label htmlFor="model" className="ml-[13px] w-[46px]">Model:</label>
                        <Combo id="model" label="Model" value="Model-1" width="w-[99px]" spinner />
                        <label htmlFor="part" className="ml-[13px] w-[31px]">Part:</label>
                        <Combo id="part" label="Part" value="Part-1" width="w-[99px]" spinner disabledUp />
                    </div>
                    <div className="flex min-h-0 flex-1">
                        <Toolbox />
                        <Viewport />
                    </div>
                    <div className="flex h-[33px] shrink-0 items-center justify-end bg-linear-to-b from-white to-[#ebebeb] pr-0.5 text-[#22a096]">
                        <svg className="h-[22px] w-[21px]" viewBox="0 0 21 22" fill="none" stroke="#22a096" strokeWidth="1.500">
                            <path d="M9 2c3-2 6-1 6 1s-2 3-4 4" />
                            <path d="M1 21L7 10c5-1 5 3 3 6s-5 3-7 2" />
                            <path d="M20 9c-3-2-6 0-5 2s4 3 3 6-5 2-6 1" />
                        </svg>
                        <span className="ml-1.5 pt-1 font-['DejaVu_Sans',sans-serif] text-base leading-4 font-bold italic">SIMULIA</span>
                    </div>
                </div>
            </main>
            <Console />
            <Taskbar />

            {/* mouse pointer */}
            <svg className="absolute top-[323px] left-[123px] h-[19px] w-3.5" viewBox="0 0 14 19"><path d="M1 1v15l4-3 2 5 2-1-2-5h5z" fill="#fff" stroke="#000" /></svg>
        </div>
    );
}
